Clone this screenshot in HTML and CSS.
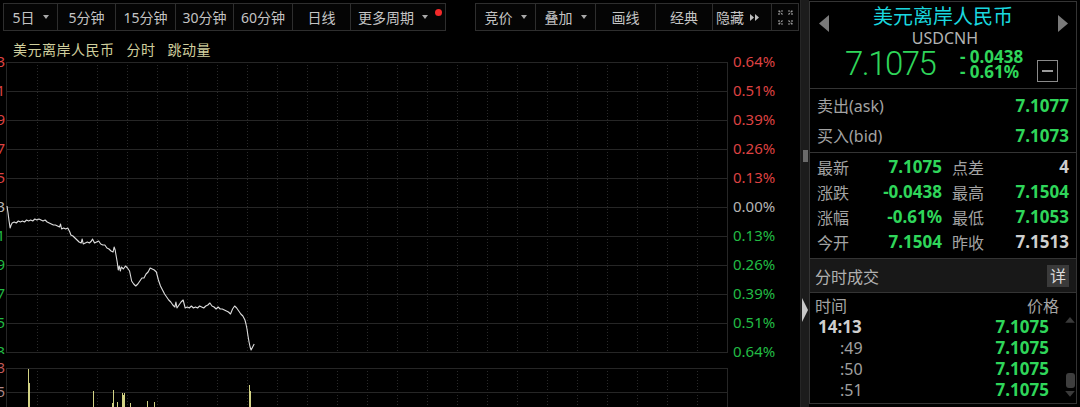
FILE: index.html
```html
<!DOCTYPE html>
<html lang="zh">
<head>
<meta charset="utf-8">
<title>美元离岸人民币 分时</title>
<link rel="stylesheet" href="styles.css">
</head>
<body>
<div class="app">
  <div class="main">
    <div class="toolbar">
      <div class="btn first w55">5日<span class="caret"></span></div>
      <div class="btn w59">5分钟</div>
      <div class="btn w61">15分钟</div>
      <div class="btn w59">30分钟</div>
      <div class="btn w60">60分钟</div>
      <div class="btn w59">日线</div>
      <div class="btn w96 left">更多周期<span class="caret"></span><span class="dot"></span></div>
      <div class="tb-gap"></div>
      <div class="btn w61">竞价<span class="caret"></span></div>
      <div class="btn w61">叠加<span class="caret"></span></div>
      <div class="btn w61">画线</div>
      <div class="btn w58">经典</div>
      <div class="btn w60 left hide">隐藏<svg class="dbl" width="10" height="7" viewBox="0 0 10 7"><polygon points="0,0 4,3.5 0,7" /><polygon points="5,0 9,3.5 5,7" /></svg></div>
      <div class="btn w28"><svg width="15" height="15" viewBox="0 0 15 15" class="fs"><path d="M1 5V1h4M1 1l4 4M10 1h4v4M14 1l-4 4M1 10v4h4M1 14l4-4M14 10v4h-4M14 14l-4-4"/></svg></div>
    </div>
    <div class="chart-title"><span>美元离岸人民币</span><span>分时</span><span>跳动量</span></div>
    <div class="plot-row">
      <div class="laxis">
        <span class="up">7.1973</span><span class="up">7.1881</span><span class="up">7.1789</span><span class="up">7.1697</span><span class="up">7.1605</span><span class="mid">7.1513</span><span class="dn">7.1421</span><span class="dn">7.1329</span><span class="dn">7.1237</span><span class="dn">7.1145</span><span class="dn">7.1053</span>
      </div>
      <svg class="plot" width="722" height="292" viewBox="0 0 722 292">
        <g class="vgrid">
          <line x1="31.5" y1="0" x2="31.5" y2="291"/><line x1="61.5" y1="0" x2="61.5" y2="291"/><line x1="91.5" y1="0" x2="91.5" y2="291"/><line x1="121.5" y1="0" x2="121.5" y2="291"/><line x1="151.5" y1="0" x2="151.5" y2="291"/><line x1="181.5" y1="0" x2="181.5" y2="291"/><line x1="211.5" y1="0" x2="211.5" y2="291"/><line x1="241.5" y1="0" x2="241.5" y2="291"/><line x1="271.5" y1="0" x2="271.5" y2="291"/><line x1="301.5" y1="0" x2="301.5" y2="291"/><line x1="331.5" y1="0" x2="331.5" y2="291"/><line x1="361.5" y1="0" x2="361.5" y2="291"/><line x1="391.5" y1="0" x2="391.5" y2="291"/><line x1="421.5" y1="0" x2="421.5" y2="291"/><line x1="451.5" y1="0" x2="451.5" y2="291"/><line x1="481.5" y1="0" x2="481.5" y2="291"/><line x1="511.5" y1="0" x2="511.5" y2="291"/><line x1="541.5" y1="0" x2="541.5" y2="291"/><line x1="571.5" y1="0" x2="571.5" y2="291"/><line x1="601.5" y1="0" x2="601.5" y2="291"/><line x1="631.5" y1="0" x2="631.5" y2="291"/><line x1="661.5" y1="0" x2="661.5" y2="291"/><line x1="691.5" y1="0" x2="691.5" y2="291"/>
        </g>
        <g class="hgrid">
          <line x1="0" y1="0.5" x2="722" y2="0.5"/><line x1="0" y1="29.5" x2="722" y2="29.5"/><line x1="0" y1="58.5" x2="722" y2="58.5"/><line x1="0" y1="87.5" x2="722" y2="87.5"/><line x1="0" y1="116.5" x2="722" y2="116.5"/><line x1="0" y1="145.5" x2="722" y2="145.5"/><line x1="0" y1="174.5" x2="722" y2="174.5"/><line x1="0" y1="203.5" x2="722" y2="203.5"/><line x1="0" y1="232.5" x2="722" y2="232.5"/><line x1="0" y1="261.5" x2="722" y2="261.5"/><line x1="0" y1="290.5" x2="722" y2="290.5"/>
          <line x1="0.5" y1="0" x2="0.5" y2="291"/><line x1="721.5" y1="0" x2="721.5" y2="291"/>
        </g>
        <polyline class="price" vector-effect="non-scaling-stroke" transform="translate(1,0) scale(1.03,1)" points="0,144 1,151 2,159 3,166 4,163 5,161 7,160 9,161 11,159 13,160 15,159 17,160 19,158 21,159 23,158 25,159 27,157 29,158 31,157 33,158 35,159 37,158 39,160 41,161 43,162 45,163 47,163 49,164 51,165 52,162 53,167 55,166 57,167 59,166 61,170 62,173 64,174 66,176 68,178 70,180 72,181 73,177 74,182 76,181 78,180 80,181 82,179 83,177 85,181 87,180 89,179 91,182 93,183 95,183 97,186 99,187 101,189 103,190 104,185 105,188 106,194 107,200 108,208 109,204 110,209 111,205 113,207 115,204 117,206 119,209 120,214 121,219 123,222 125,224 127,222 129,219 131,216 133,216 135,212 137,210 139,206 141,207 143,208 145,210 146,214 147,218 149,224 151,228 153,232 155,235 157,238 159,240 161,243 163,245 164,240 165,246 167,243 169,240 171,238 172,242 173,246 175,245 177,246 179,244 181,246 183,245 185,246 187,244 189,245 191,246 193,244 195,243 197,241 199,244 201,245 203,247 205,245 207,247 209,247 211,248 213,249 215,250 217,252 219,247 221,244 223,246 225,249 227,252 229,254 231,258 232,262 233,267 234,274 235,280 236,285 237,288 238,286 239,284 240,282"/>
      </svg>
      <div class="raxis">
        <span class="up">0.64%</span><span class="up">0.51%</span><span class="up">0.39%</span><span class="up">0.26%</span><span class="up">0.13%</span><span class="mid">0.00%</span><span class="dn">0.13%</span><span class="dn">0.26%</span><span class="dn">0.39%</span><span class="dn">0.51%</span><span class="dn">0.64%</span>
      </div>
    </div>
    <div class="vol-row">
      <div class="laxis vaxis"><span class="vtop">2853</span><span class="vmid">1425</span></div>
      <svg class="vol" width="722" height="39" viewBox="0 0 722 39">
        <g class="vgrid">
          <line x1="31.5" y1="0" x2="31.5" y2="39"/><line x1="61.5" y1="0" x2="61.5" y2="39"/><line x1="91.5" y1="0" x2="91.5" y2="39"/><line x1="121.5" y1="0" x2="121.5" y2="39"/><line x1="151.5" y1="0" x2="151.5" y2="39"/><line x1="181.5" y1="0" x2="181.5" y2="39"/><line x1="211.5" y1="0" x2="211.5" y2="39"/><line x1="241.5" y1="0" x2="241.5" y2="39"/><line x1="271.5" y1="0" x2="271.5" y2="39"/><line x1="301.5" y1="0" x2="301.5" y2="39"/><line x1="331.5" y1="0" x2="331.5" y2="39"/><line x1="361.5" y1="0" x2="361.5" y2="39"/><line x1="391.5" y1="0" x2="391.5" y2="39"/><line x1="421.5" y1="0" x2="421.5" y2="39"/><line x1="451.5" y1="0" x2="451.5" y2="39"/><line x1="481.5" y1="0" x2="481.5" y2="39"/><line x1="511.5" y1="0" x2="511.5" y2="39"/><line x1="541.5" y1="0" x2="541.5" y2="39"/><line x1="571.5" y1="0" x2="571.5" y2="39"/><line x1="601.5" y1="0" x2="601.5" y2="39"/><line x1="631.5" y1="0" x2="631.5" y2="39"/><line x1="661.5" y1="0" x2="661.5" y2="39"/><line x1="691.5" y1="0" x2="691.5" y2="39"/>
        </g>
        <g class="hgrid">
          <line x1="0" y1="0.5" x2="722" y2="0.5"/><line x1="0" y1="24.5" x2="722" y2="24.5"/>
          <line x1="0.5" y1="0" x2="0.5" y2="39"/><line x1="721.5" y1="0" x2="721.5" y2="39"/>
        </g>
        <g class="bars">
          <line x1="22.5" y1="1" x2="22.5" y2="39"/><line x1="23.5" y1="15" x2="23.5" y2="39"/><line x1="87.5" y1="23" x2="87.5" y2="39"/><line x1="106.5" y1="35" x2="106.5" y2="39"/><line x1="107.5" y1="22" x2="107.5" y2="39"/><line x1="111.5" y1="34" x2="111.5" y2="39"/><line x1="116.5" y1="25" x2="116.5" y2="39"/><line x1="117.5" y1="27" x2="117.5" y2="39"/><line x1="118.5" y1="25" x2="118.5" y2="39"/><line x1="124.5" y1="35" x2="124.5" y2="39"/><line x1="141.5" y1="33" x2="141.5" y2="39"/><line x1="148.5" y1="34" x2="148.5" y2="39"/><line x1="243.5" y1="17" x2="243.5" y2="39"/><line x1="244.5" y1="23" x2="244.5" y2="39"/>
        </g>
      </svg>
    </div>
  </div>

  <div class="sep">
    <div class="grip"></div>
    <svg class="sep-arrow" width="6" height="24" viewBox="0 0 6 24"><polygon points="0,0 6,12 0,24"/></svg>
  </div>

  <div class="side">
    <div class="card">
      <div class="head">
        <svg class="nav nav-l" width="10" height="17" viewBox="0 0 10 17"><polygon points="10,0 0,8.5 10,17"/></svg>
        <svg class="nav nav-r" width="10" height="17" viewBox="0 0 10 17"><polygon points="0,0 10,8.5 0,17"/></svg>
        <div class="name">美元离岸人民币</div>
        <div class="code">USDCNH</div>
        <div class="price-row">
          <span class="big">7.1075</span>
          <div class="chg"><span>- 0.0438</span><span>- 0.61%</span></div>
          <div class="minbox"><span></span></div>
        </div>
      </div>
      <div class="quote">
        <div class="qrow"><span class="lbl">卖出(ask)</span><span class="val">7.1077</span></div>
        <div class="qrow"><span class="lbl">买入(bid)</span><span class="val">7.1073</span></div>
      </div>
      <div class="stats">
        <span class="lbl">最新</span><span class="val">7.1075</span><span class="lbl l2">点差</span><span class="val wh">4</span>
        <span class="lbl">涨跌</span><span class="val">-0.0438</span><span class="lbl l2">最高</span><span class="val">7.1504</span>
        <span class="lbl">涨幅</span><span class="val">-0.61%</span><span class="lbl l2">最低</span><span class="val">7.1053</span>
        <span class="lbl">今开</span><span class="val">7.1504</span><span class="lbl l2">昨收</span><span class="val wh">7.1513</span>
      </div>
      <div class="th">
        <span>分时成交</span><span class="detail">详</span>
      </div>
      <div class="trades">
        <div class="trow hdr"><span>时间</span><span class="pcol">价格</span></div>
        <div class="trow"><span class="t1">14:13</span><span class="p">7.1075</span></div>
        <div class="trow"><span class="ts">:49</span><span class="p">7.1075</span></div>
        <div class="trow"><span class="ts">:50</span><span class="p">7.1075</span></div>
        <div class="trow"><span class="ts">:51</span><span class="p">7.1075</span></div>
        <div class="scroll">
          <svg class="sc-up" width="10" height="6" viewBox="0 0 10 6"><polygon points="0,6 5,0 10,6"/></svg>
          <div class="thumb"></div>
          <svg class="sc-dn" width="10" height="6" viewBox="0 0 10 6"><polygon points="0,0 5,6 10,0"/></svg>
        </div>
      </div>
    </div>
  </div>
</div>
</body>
</html>
```

FILE: styles.css
```css
html, body {
  margin: 0;
  padding: 0;
  background: #000;
}
body {
  width: 1080px;
  height: 407px;
  overflow: hidden;
  font-family: "Noto Sans", "Noto Sans CJK SC", sans-serif;
  color: #c6c6c6;
}
.app {
  display: flex;
  height: 407px;
}

/* ---------- main chart column ---------- */
.main {
  width: 800px;
  display: flex;
  flex-direction: column;
}
.toolbar {
  display: flex;
  height: 35px;
  box-sizing: border-box;
  padding: 3px 0 4px 3px;
}
.btn {
  box-sizing: border-box;
  height: 28px;
  border: 1px solid #2e2e2e;
  margin-left: -1px;
  display: flex;
  align-items: center;
  justify-content: center;
  gap: 8px;
  color: #c4c4c4;
  font-size: 14px;
  position: relative;
  background: #050505;
}
.btn.first { margin-left: 0; }
.btn.left { justify-content: flex-start; padding-left: 7px; }
.btn.hide { padding-left: 3px; gap: 6px; }
.w28 { width: 28px; }
.w55 { width: 55px; }
.w58 { width: 58px; }
.w59 { width: 59px; }
.w60 { width: 60px; }
.w61 { width: 61px; }
.w96 { width: 96px; }
.tb-gap { width: 30px; }
.caret {
  width: 0;
  height: 0;
  border-left: 3px solid transparent;
  border-right: 3px solid transparent;
  border-top: 4px solid #a8a8a8;
}
.dot {
  position: absolute;
  left: 84px;
  top: 5px;
  width: 7px;
  height: 7px;
  border-radius: 50%;
  background: #f42a2a;
}
.dbl polygon { fill: #bdbdbd; }
.fs path {
  fill: none;
  stroke: #9a9a9a;
  stroke-width: 1.2;
  stroke-dasharray: 2 1;
}

.chart-title {
  height: 27px;
  box-sizing: border-box;
  padding: 1px 0 0 13px;
  display: flex;
  gap: 12px;
  align-items: center;
  font-size: 14px;
  letter-spacing: 0.5px;
  color: #d0cf9e;
}

.plot-row {
  display: flex;
  height: 292px;
}
.laxis {
  width: 6px;
  overflow: hidden;
  display: flex;
  flex-direction: column;
  align-items: flex-end;
  margin-top: -15px;
  font-size: 15px;
  flex: none;
}
.laxis span {
  height: 29px;
  line-height: 29px;
  margin-right: 1px;
  white-space: nowrap;
}
.up { color: #dd4242; }
.mid { color: #b4b4b4; }
.dn { color: #22bb44; }
.plot, .vol {
  display: block;
  flex: none;
}
.vgrid line {
  stroke: #2a2a2a;
  stroke-width: 1;
  stroke-dasharray: 1 2;
}
.hgrid line {
  stroke: #262626;
  stroke-width: 1;
}
.price {
  fill: none;
  stroke: #dcdcdc;
  stroke-width: 1.1;
  stroke-linejoin: round;
}
.raxis {
  width: 72px;
  padding-left: 5px;
  box-sizing: border-box;
  display: flex;
  flex-direction: column;
  margin-top: -15px;
  font-size: 15px;
}
.raxis span {
  height: 29px;
  line-height: 29px;
}
.vol-row {
  display: flex;
  margin-top: 14px;
  height: 39px;
}
.vaxis {
  margin-top: -10px;
}
.vaxis span {
  height: 24px;
  line-height: 20px;
  font-size: 14px;
}
.vtop { color: #c25a5a; }
.vmid { color: #b08a8a; }
.bars line {
  stroke: #d2d284;
  stroke-width: 1;
}

/* ---------- separator ---------- */
.sep {
  width: 9px;
  background: #1c1c1c;
  border-left: 1px solid #262626;
  box-sizing: border-box;
  display: flex;
  flex-direction: column;
  align-items: center;
}
.grip {
  margin-top: 150px;
  width: 5px;
  height: 12px;
  background-image: radial-gradient(circle, #6a6a6a 0.8px, transparent 1px);
  background-size: 2px 2px;
}
.sep-arrow {
  margin-top: 136px;
}
.sep-arrow polygon { fill: #c9c9c9; }

/* ---------- right panel ---------- */
.side {
  width: 271px;
  box-sizing: border-box;
  padding: 1px 3px 0 0;
}
.card {
  height: 403px;
  box-sizing: border-box;
  border: 1px solid #343434;
  display: flex;
  flex-direction: column;
}
.head {
  height: 87px;
  box-sizing: border-box;
  border-bottom: 1px solid #343434;
  padding-top: 1px;
  position: relative;
}
.nav {
  position: absolute;
  top: 13px;
}
.nav polygon { fill: #7a7a7a; }
.nav-l { left: 9px; }
.nav-r { right: 8px; }
.name {
  height: 25px;
  line-height: 25px;
  text-align: center;
  font-size: 20px;
  color: #1ad7df;
  font-family: "Noto Sans CJK SC", sans-serif;
}
.code {
  height: 21px;
  line-height: 21px;
  text-align: center;
  font-size: 16px;
  color: #b3b3b3;
  padding-left: 4px;
}
.price-row {
  display: flex;
  align-items: center;
  height: 30px;
  padding-left: 35px;
}
.big {
  width: 115px;
  font-family: Roboto, "Noto Sans", sans-serif;
  font-weight: 300;
  font-size: 33px;
  letter-spacing: -1.5px;
  color: #2fd65a;
  line-height: 30px;
}
.chg {
  width: 77px;
  display: flex;
  flex-direction: column;
  color: #2fd65a;
  font-weight: bold;
  font-size: 17px;
}
.chg span {
  height: 15px;
  line-height: 15px;
  white-space: pre;
}
.minbox {
  width: 21px;
  height: 22px;
  box-sizing: border-box;
  border: 1.5px solid #8a8a8a;
  display: flex;
  align-items: center;
  justify-content: center;
  margin-top: 13px;
}
.minbox span {
  width: 11px;
  height: 2px;
  background: #9a9a9a;
}

.quote {
  height: 64px;
  box-sizing: border-box;
  border-bottom: 1px solid #343434;
  padding: 1px 7px 0 7px;
}
.qrow {
  height: 30px;
  display: flex;
  align-items: center;
  justify-content: space-between;
}
.lbl {
  font-size: 16px;
  color: #a3a3a3;
}
.val {
  font-size: 17px;
  font-weight: bold;
  color: #2fd65a;
  text-align: right;
}
.val.wh { color: #cfcfcf; }

.stats {
  height: 106px;
  box-sizing: border-box;
  border-bottom: 1px solid #343434;
  padding: 1px 7px 0 7px;
  display: grid;
  grid-template-columns: 40px 85px 50px 1fr;
  grid-auto-rows: 25px;
  align-items: center;
}
.l2 { padding-left: 10px; }

.th {
  height: 34px;
  box-sizing: border-box;
  border-bottom: 1px solid #343434;
  background: #181818;
  display: flex;
  align-items: center;
  justify-content: space-between;
  padding: 0 7px 0 5px;
  font-size: 16px;
  color: #b0b0b0;
}
.detail {
  width: 22px;
  height: 22px;
  line-height: 22px;
  text-align: center;
  background: #3a3a3a;
  color: #dcdcdc;
  font-size: 16px;
}

.trades {
  flex: 1;
  position: relative;
  padding: 0 27px 0 5px;
}
.trow {
  height: 21px;
  display: flex;
  align-items: center;
  justify-content: space-between;
}
.trow.hdr {
  height: 23px;
  font-size: 16px;
  color: #a3a3a3;
  margin-right: -10px;
}
.t1 {
  font-size: 17px;
  font-weight: bold;
  color: #cfcfcf;
  padding-left: 3px;
}
.ts {
  font-size: 16px;
  color: #a0a0a0;
  padding-left: 25px;
}
.p {
  font-size: 17px;
  font-weight: bold;
  color: #2fd65a;
}
.scroll {
  position: absolute;
  right: 1px;
  top: 24px;
  width: 10px;
  height: 80px;
  display: flex;
  flex-direction: column;
  align-items: center;
}
.sc-up polygon, .sc-dn polygon { fill: #3a3a3a; }
.thumb {
  margin-top: 50px;
  width: 9px;
  height: 16px;
  border-radius: 3px;
  background: #3e3e3e;
}
.sc-dn { margin-top: 3px; }
```
